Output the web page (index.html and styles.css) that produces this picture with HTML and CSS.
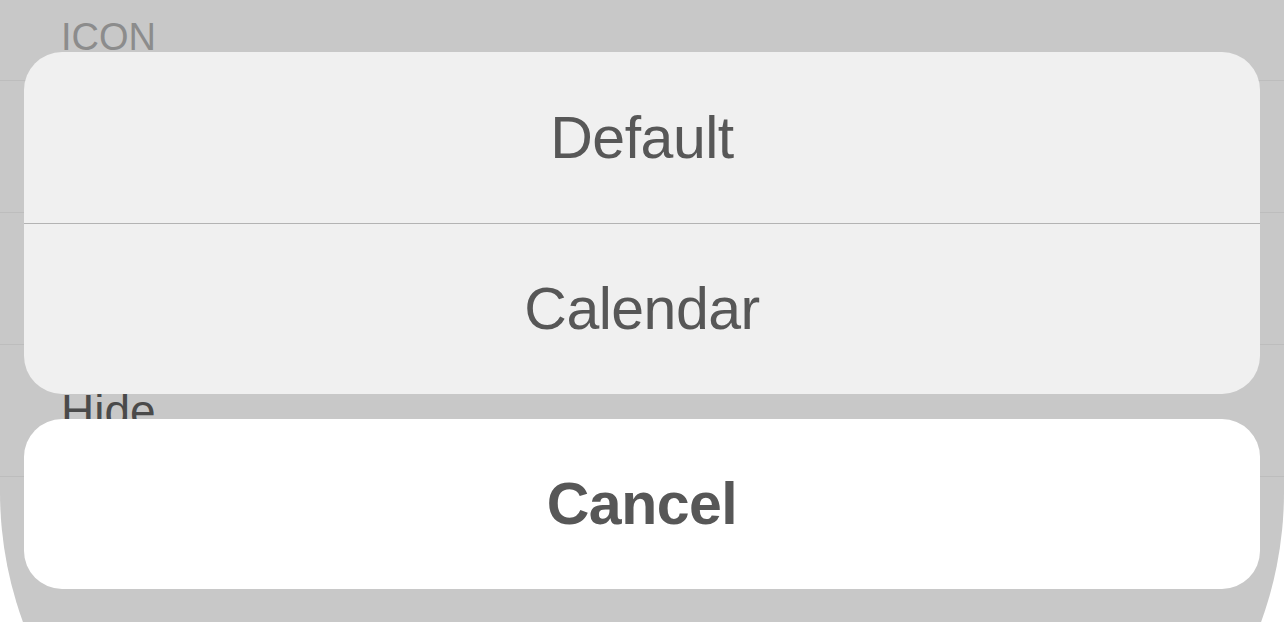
FILE: index.html
```html
<!DOCTYPE html>
<html lang="en">
<head>
    <meta charset="UTF-8">
    <title>Icon</title>
    <link rel="stylesheet" href="styles.css">
</head>
<body>
    <div class="screen">
        <div class="section-header">ICON</div>
        <ul class="list">
            <li class="row"></li>
            <li class="row"></li>
            <li class="row">Hide</li>
            <li class="row"></li>
        </ul>

        <!-- action sheet sits over the list -->
        <div class="sheet">
            <div class="sheet-group">
                <button class="sheet-btn">Default</button>
                <button class="sheet-btn">Calendar</button>
            </div>
            <button class="sheet-btn cancel">Cancel</button>
        </div>
    </div>
</body>
</html>
```

FILE: styles.css
```css
html, body {
    margin: 0;
    height: 100%;
    overflow: hidden;
}
body {
    background-color: #ffffff;
    font-family: "Liberation Sans", Arial, sans-serif;
}
.screen {
    position: relative;
    height: 872px;
    background-color: #c8c8c8;
    border-radius: 0 0 380px 380px;
}
.section-header {
    height: 80px;
    box-sizing: border-box;
    padding: 18px 0 0 61px;
    font-size: 38px;
    line-height: 38px;
    color: #8c8c8c;
}
.list {
    margin: 0;
    padding: 0;
    list-style: none;
}
.row {
    height: 131px;
    border-top: 1px solid #bdbdbd;
    padding-left: 61px;
    display: flex;
    align-items: center;
    font-size: 46px;
    color: #4a4a4a;
}
.sheet {
    position: absolute;
    top: 52px;
    left: 24px;
    right: 24px;
    display: flex;
    flex-direction: column;
    gap: 25px;
}
.sheet-group {
    background-color: #f0f0f0;
    border-radius: 38px;
    overflow: hidden;
    display: flex;
    flex-direction: column;
}
.sheet-btn {
    box-sizing: border-box;
    height: 171px;
    border: none;
    margin: 0;
    padding: 0;
    background: transparent;
    font-family: "Liberation Sans", Arial, sans-serif;
    font-size: 59px;
    letter-spacing: -0.5px;
    color: #575757;
    display: flex;
    align-items: center;
    justify-content: center;
}
.sheet-group .sheet-btn + .sheet-btn {
    border-top: 1px solid #b3b3b3;
}
.cancel {
    height: 170px;
    background-color: #ffffff;
    border-radius: 38px;
    font-weight: bold;
}
```
